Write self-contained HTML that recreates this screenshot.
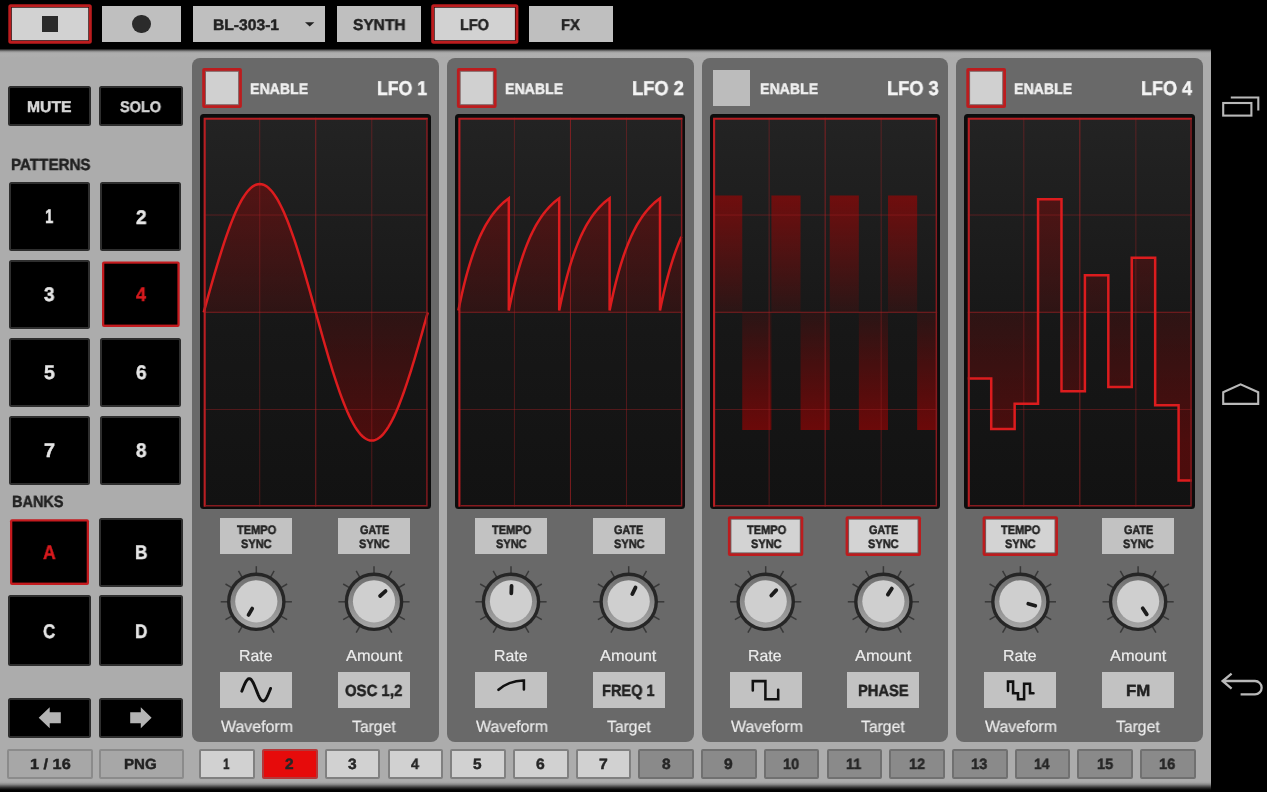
<!DOCTYPE html>
<html lang="en"><head><meta charset="utf-8"><title>LFO</title>
<style>
html,body{margin:0;padding:0;background:#000}
body{width:1267px;height:792px;position:relative;overflow:hidden;font-family:"Liberation Sans",sans-serif}
.a{position:absolute;box-sizing:border-box;display:block}
.t{position:absolute;white-space:nowrap;transform-origin:0 0;display:block;will-change:transform;text-rendering:geometricPrecision}
.bd{-webkit-text-stroke:.45px currentColor}
.rg{-webkit-text-stroke:.18px currentColor}
.topbar{background:#000}
.mainbg{background:#acacac}
.topshadow{background:linear-gradient(#000 0,#000 6%,#3c3c3c 18%,#7c7c7c 29%,#9e9e9e 40%,#adadad 52%,#aeaeae 75%,#acacac 100%)}
.botshadow{background:linear-gradient(#acacac 0,#a4a4a4 14%,#8a8a8a 30%,#5a5a5a 46%,#2a2a2a 62%,#0a0a0a 78%,#000 88%)}
.tb{background:#bfbfbf}
.tbact{background:#000;border:2.3px solid #c4191c;border-radius:2px}
.tbact i{position:absolute;left:1px;top:1px;right:1px;bottom:1px;background:#d2d2d2}
.pad{background:#000;border:2px solid #2e2e2e;border-radius:2.5px}
.padact{background:#000;border:2.4px solid #c41a1e;border-radius:1.5px;box-shadow:0 0 1.5px rgba(220,60,60,.8)}
.sbtn{border:2px solid #8b8b8b;border-radius:2px}
.sbtn.dim{background:#a7a7a7}
.sbtn.lit{background:#d1d1d1;border-color:#808080}
.sbtn.red{background:#e60b0b;border-color:#b3393a}
.sbtn.dim2{background:#8a8a8a;border-color:#707070}
.panel{background:#696969;border-radius:8px}
.chk{background:#bcbcbc}
.chk.on{background:#c4191c;border-radius:2px}
.chk.on i{position:absolute;left:3.4px;top:3.4px;right:3.4px;bottom:3.4px;background:#d0d0d0}
.dframe{background:#0c0c0c;border-radius:3.5px}
.sy{background:#c2c2c2}
.sy.on{background:#696969;border:2.6px solid #c01c1e;border-radius:2px}
.sy.on i{position:absolute;left:.9px;top:.9px;right:.9px;bottom:.9px;background:#d3d3d3}
svg .g{stroke:#a82024;stroke-width:1;opacity:.42}
svg .g.c{opacity:.7}
</style></head>
<body>
<svg width="0" height="0" style="position:absolute"><defs><linearGradient id="dbg" x1="0" y1="0" x2="0" y2="1"><stop offset="0" stop-color="#232323"/><stop offset="0.55" stop-color="#171717"/><stop offset="1" stop-color="#121212"/></linearGradient><linearGradient id="wf" gradientUnits="userSpaceOnUse" x1="0" y1="180" x2="0" y2="445"><stop offset="0" stop-color="#aa0000" stop-opacity=".38"/><stop offset="0.5" stop-color="#aa0000" stop-opacity=".15"/><stop offset="1" stop-color="#aa0000" stop-opacity=".38"/></linearGradient><linearGradient id="wf2" gradientUnits="userSpaceOnUse" x1="0" y1="195" x2="0" y2="430"><stop offset="0" stop-color="#b00000" stop-opacity=".56"/><stop offset="0.5" stop-color="#b00000" stop-opacity=".12"/><stop offset="1" stop-color="#b00000" stop-opacity=".56"/></linearGradient><linearGradient id="ring" x1="0" y1="0" x2="0" y2="1"><stop offset="0" stop-color="#6e6e6e"/><stop offset="1" stop-color="#a6a6a6"/></linearGradient></defs></svg>
<div class="a mainbg" style="left:0px;top:48px;width:1211px;height:744px;"></div>
<div class="a topshadow" style="left:0px;top:48px;width:1211px;height:10px;"></div>
<div class="a botshadow" style="left:0px;top:781px;width:1211px;height:11px;"></div>
<div class="a topbar" style="left:0;top:0;width:1267px;height:48px"></div>
<svg class="a" style="left:7px;top:3px" width="86" height="42" viewBox="7 3 86 42"><rect x="8.3" y="4.2" width="83.5" height="39.5" rx="2.5" fill="#bc1c1e"/><rect x="11.1" y="7" width="77.9" height="33.9" fill="#2a0808"/><rect x="11.8" y="7.7" width="76.5" height="32.5" fill="#d2d2d2"/></svg>
<div class="a" style="left:42px;top:16px;width:16px;height:16px;background:#2b2b2b"></div>
<div class="a tb" style="left:101.8px;top:6px;width:79.5px;height:36px;"></div>
<div class="a" style="left:132.1px;top:14.7px;width:18.6px;height:18.6px;background:#2b2b2b;border-radius:50%"></div>
<div class="a tb" style="left:193.2px;top:6px;width:132.1px;height:36px;"></div>
<span class="t bd" style="left:213.14px;top:18.18px;font-size:15.35px;line-height:15.35px;font-weight:bold;color:#222;transform:scale(1.0193,1.0000)">BL-303-1</span>
<svg class="a" style="left:304px;top:21px" width="12" height="7" viewBox="0 0 12 7"><path d="M1 1.2 H10.4 L5.7 5.6 Z" fill="#222"/></svg>
<div class="a tb" style="left:337.1px;top:6px;width:83.6px;height:36px;"></div>
<span class="t bd" style="left:353.18px;top:17.93px;font-size:15.64px;line-height:15.64px;font-weight:bold;color:#222;transform:scale(0.9912,1.0000)">SYNTH</span>
<svg class="a" style="left:430px;top:3px" width="90" height="42" viewBox="430 3 90 42"><rect x="431.2" y="4.2" width="87.2" height="39.5" rx="2.5" fill="#bc1c1e"/><rect x="434" y="7" width="81.6" height="33.9" fill="#2a0808"/><rect x="434.7" y="7.7" width="80.2" height="32.5" fill="#d2d2d2"/></svg>
<span class="t bd" style="left:459.6px;top:17.93px;font-size:15.64px;line-height:15.64px;font-weight:bold;color:#222;transform:scale(0.9277,1.0000)">LFO</span>
<div class="a tb" style="left:528.5px;top:6px;width:84.1px;height:36px;"></div>
<span class="t bd" style="left:560.58px;top:17.93px;font-size:15.64px;line-height:15.64px;font-weight:bold;color:#222;transform:scale(0.9493,1.0000)">FX</span>
<div class="a pad" style="left:8.2px;top:86px;width:82.8px;height:39.6px;"></div>
<span class="t bd" style="left:27.13px;top:99.76px;font-size:15.49px;line-height:15.49px;font-weight:bold;color:#d6d6d6;transform:scale(1.0141,1.0000)">MUTE</span>
<div class="a pad" style="left:99.2px;top:86px;width:83.4px;height:39.6px;"></div>
<span class="t bd" style="left:120.4px;top:99.76px;font-size:15.49px;line-height:15.49px;font-weight:bold;color:#d6d6d6;transform:scale(0.9381,1.0000)">SOLO</span>
<span class="t bd" style="left:11.15px;top:157.04px;font-size:16.22px;line-height:16.22px;font-weight:bold;color:#222;transform:scale(0.9370,1.0000)">PATTERNS</span>
<div class="a pad" style="left:9px;top:181.8px;width:81px;height:69px;"></div>
<span class="t bd" style="left:45.14px;top:207.79px;font-size:19.71px;line-height:19.71px;font-weight:bold;color:#e6e6e6;transform:scale(0.7582,1.0000)">1</span>
<div class="a pad" style="left:100.2px;top:181.8px;width:81.3px;height:69px;"></div>
<span class="t bd" style="left:135.53px;top:208.79px;font-size:19.71px;line-height:19.71px;font-weight:bold;color:#e6e6e6;transform:scale(0.9639,1.0000)">2</span>
<div class="a pad" style="left:9px;top:259.8px;width:81px;height:69px;"></div>
<span class="t bd" style="left:44.32px;top:285.79px;font-size:19.71px;line-height:19.71px;font-weight:bold;color:#e6e6e6;transform:scale(0.9600,1.0000)">3</span>
<svg class="a" style="left:101px;top:260px" width="80" height="68" viewBox="101 260 80 68"><rect x="102" y="261.4" width="77.7" height="65.5" rx="2" fill="#c41a1e"/><rect x="104.3" y="263.7" width="73.1" height="60.9" fill="#000"/></svg>
<span class="t bd" style="left:135.92px;top:285.79px;font-size:19.71px;line-height:19.71px;font-weight:bold;color:#d81a1e;transform:scale(0.9221,1.0000)">4</span>
<div class="a pad" style="left:9px;top:337.8px;width:81px;height:69px;"></div>
<span class="t bd" style="left:44.27px;top:363.79px;font-size:19.71px;line-height:19.71px;font-weight:bold;color:#e6e6e6;transform:scale(0.9848,1.0000)">5</span>
<div class="a pad" style="left:100.2px;top:337.8px;width:81.3px;height:69px;"></div>
<span class="t bd" style="left:135.53px;top:363.79px;font-size:19.71px;line-height:19.71px;font-weight:bold;color:#e6e6e6;transform:scale(0.9651,1.0000)">6</span>
<div class="a pad" style="left:9px;top:415.8px;width:81px;height:69px;"></div>
<span class="t bd" style="left:43.96px;top:441.79px;font-size:19.71px;line-height:19.71px;font-weight:bold;color:#e6e6e6;transform:scale(1.0058,1.0000)">7</span>
<div class="a pad" style="left:100.2px;top:415.8px;width:81.3px;height:69px;"></div>
<span class="t bd" style="left:135.63px;top:441.79px;font-size:19.71px;line-height:19.71px;font-weight:bold;color:#e6e6e6;transform:scale(0.9594,1.0000)">8</span>
<span class="t bd" style="left:11.79px;top:494.44px;font-size:16.22px;line-height:16.22px;font-weight:bold;color:#222;transform:scale(0.8945,1.0000)">BANKS</span>
<svg class="a" style="left:9px;top:518px" width="81" height="68" viewBox="9 518 81 68"><rect x="10" y="519.2" width="79" height="65.7" rx="2" fill="#c41a1e"/><rect x="12.3" y="521.5" width="74.4" height="61.1" fill="#000"/></svg>
<span class="t bd" style="left:43.34px;top:543.69px;font-size:19.71px;line-height:19.71px;font-weight:bold;color:#d81a1e;transform:scale(0.8959,1.0000)">A</span>
<div class="a pad" style="left:99.2px;top:517.6px;width:83.5px;height:69.2px;"></div>
<span class="t bd" style="left:134.61px;top:543.69px;font-size:19.71px;line-height:19.71px;font-weight:bold;color:#e6e6e6;transform:scale(0.8722,1.0000)">B</span>
<div class="a pad" style="left:8.2px;top:595.3px;width:82.6px;height:70.4px;"></div>
<span class="t bd" style="left:43.45px;top:622.99px;font-size:19.71px;line-height:19.71px;font-weight:bold;color:#e6e6e6;transform:scale(0.8630,1.0000)">C</span>
<div class="a pad" style="left:99.2px;top:595.3px;width:83.5px;height:70.4px;"></div>
<span class="t bd" style="left:134.77px;top:622.99px;font-size:19.71px;line-height:19.71px;font-weight:bold;color:#e6e6e6;transform:scale(0.8695,1.0000)">D</span>
<div class="a pad" style="left:8.2px;top:698px;width:82.6px;height:39.5px;"></div>
<div class="a pad" style="left:99.1px;top:698px;width:83.7px;height:39.5px;"></div>
<svg class="a" style="left:38px;top:706px" width="24" height="24" viewBox="38 706 24 24"><path d="M38.7 717.7 L49.7 707.3 V712.2 H60.8 V723.2 H49.7 V728.3 Z" fill="#b4b4b4"/></svg>
<svg class="a" style="left:129px;top:706px" width="24" height="24" viewBox="129 706 24 24"><path d="M151.6 717.7 L140.8 707.3 V712.2 H130.2 V723.2 H140.8 V728.3 Z" fill="#b4b4b4"/></svg>
<div class="a sbtn dim" style="left:7.4px;top:749px;width:85.3px;height:30px;"></div>
<span class="t bd" style="left:29.91px;top:758.4px;font-size:14.62px;line-height:14.62px;font-weight:bold;color:#222;transform:scale(1.1132,1.0000)">1 / 16</span>
<div class="a sbtn dim" style="left:99.1px;top:749px;width:85.3px;height:30px;"></div>
<span class="t bd" style="left:124.37px;top:758.4px;font-size:14.62px;line-height:14.62px;font-weight:bold;color:#222;transform:scale(1.0322,1.0000)">PNG</span>
<div class="a sbtn lit" style="left:199.4px;top:749px;width:55.6px;height:30px;"></div>
<span class="t bd" style="left:223.35px;top:758.45px;font-size:14.91px;line-height:14.91px;font-weight:bold;color:#262626;transform:scale(0.7920,1.0000)">1</span>
<div class="a sbtn red" style="left:262.12px;top:749px;width:55.6px;height:30px;"></div>
<span class="t bd" style="left:285.23px;top:758.45px;font-size:14.91px;line-height:14.91px;font-weight:bold;color:#262626;transform:scale(1.0361,1.0000)">2</span>
<div class="a sbtn lit" style="left:324.84px;top:749px;width:55.6px;height:30px;"></div>
<span class="t bd" style="left:348.11px;top:758.45px;font-size:14.91px;line-height:14.91px;font-weight:bold;color:#262626;transform:scale(1.0414,1.0000)">3</span>
<div class="a sbtn lit" style="left:387.56px;top:749px;width:55.6px;height:30px;"></div>
<span class="t bd" style="left:410.99px;top:758.45px;font-size:14.91px;line-height:14.91px;font-weight:bold;color:#262626;transform:scale(0.9564,1.0000)">4</span>
<div class="a sbtn lit" style="left:450.28px;top:749px;width:55.6px;height:30px;"></div>
<span class="t bd" style="left:473.47px;top:758.45px;font-size:14.91px;line-height:14.91px;font-weight:bold;color:#262626;transform:scale(1.0314,1.0000)">5</span>
<div class="a sbtn lit" style="left:513px;top:749px;width:55.6px;height:30px;"></div>
<span class="t bd" style="left:536.11px;top:758.45px;font-size:14.91px;line-height:14.91px;font-weight:bold;color:#262626;transform:scale(1.0517,1.0000)">6</span>
<div class="a sbtn lit" style="left:575.72px;top:749px;width:55.6px;height:30px;"></div>
<span class="t bd" style="left:598.67px;top:758.45px;font-size:14.91px;line-height:14.91px;font-weight:bold;color:#262626;transform:scale(1.0549,1.0000)">7</span>
<div class="a sbtn dim2" style="left:638.44px;top:749px;width:55.6px;height:30px;"></div>
<span class="t bd" style="left:661.63px;top:758.45px;font-size:14.91px;line-height:14.91px;font-weight:bold;color:#262626;transform:scale(1.0414,1.0000)">8</span>
<div class="a sbtn dim2" style="left:701.16px;top:749px;width:55.6px;height:30px;"></div>
<span class="t bd" style="left:724.27px;top:758.45px;font-size:14.91px;line-height:14.91px;font-weight:bold;color:#262626;transform:scale(1.0506,1.0000)">9</span>
<div class="a sbtn dim2" style="left:763.88px;top:749px;width:55.6px;height:30px;"></div>
<span class="t bd" style="left:782.98px;top:758.45px;font-size:14.91px;line-height:14.91px;font-weight:bold;color:#262626;transform:scale(0.9782,1.0000)">10</span>
<div class="a sbtn dim2" style="left:826.6px;top:749px;width:55.6px;height:30px;"></div>
<span class="t bd" style="left:846.21px;top:758.45px;font-size:14.91px;line-height:14.91px;font-weight:bold;color:#262626;transform:scale(0.9666,1.0000)">11</span>
<div class="a sbtn dim2" style="left:889.32px;top:749px;width:55.6px;height:30px;"></div>
<span class="t bd" style="left:908.95px;top:758.45px;font-size:14.91px;line-height:14.91px;font-weight:bold;color:#262626;transform:scale(0.9750,1.0000)">12</span>
<div class="a sbtn dim2" style="left:952.04px;top:749px;width:55.6px;height:30px;"></div>
<span class="t bd" style="left:971.13px;top:758.45px;font-size:14.91px;line-height:14.91px;font-weight:bold;color:#262626;transform:scale(0.9865,1.0000)">13</span>
<div class="a sbtn dim2" style="left:1014.76px;top:749px;width:55.6px;height:30px;"></div>
<span class="t bd" style="left:1033.89px;top:758.45px;font-size:14.91px;line-height:14.91px;font-weight:bold;color:#262626;transform:scale(0.9350,1.0000)">14</span>
<div class="a sbtn dim2" style="left:1077.48px;top:749px;width:55.6px;height:30px;"></div>
<span class="t bd" style="left:1096.58px;top:758.45px;font-size:14.91px;line-height:14.91px;font-weight:bold;color:#262626;transform:scale(0.9799,1.0000)">15</span>
<div class="a sbtn dim2" style="left:1140.2px;top:749px;width:55.6px;height:30px;"></div>
<span class="t bd" style="left:1159.29px;top:758.45px;font-size:14.91px;line-height:14.91px;font-weight:bold;color:#262626;transform:scale(0.9852,1.0000)">16</span>
<div class="a panel" style="left:192.2px;top:58.3px;width:246.7px;height:683.7px;"></div>
<svg class="a" style="left:201px;top:67px" width="42" height="42" viewBox="201 67 42 42"><rect x="202.2" y="68" width="39.7" height="40" rx="2" fill="#bc1c1e"/><rect x="205" y="70.8" width="34.1" height="34.4" fill="#806060"/><rect x="206" y="71.8" width="32.1" height="32.4" fill="#d0d0d0"/></svg>
<span class="t bd" style="left:250.12px;top:82.2px;font-size:15.2px;line-height:15.2px;font-weight:bold;color:#efefef;transform:scale(0.9320,1.0000)">ENABLE</span>
<span class="t bd" style="left:377.18px;top:79.42px;font-size:20.15px;line-height:20.15px;font-weight:bold;color:#f4f4f4;transform:scale(0.8793,1.0000)">LFO 1</span>
<div class="a dframe" style="left:200.1px;top:114.2px;width:230.5px;height:394.6px;"></div>
<svg class="a" style="left:202px;top:116px" width="227" height="392" viewBox="202 116 227 392"><rect x="203.7" y="117.8" width="224.1" height="388.9" fill="url(#dbg)"/><path d="M203.7 312.3 L203.7 312.3 L205.57 305.59 L207.44 298.89 L209.3 292.23 L211.17 285.62 L213.04 279.09 L214.91 272.65 L216.77 266.32 L218.64 260.12 L220.51 254.05 L222.38 248.15 L224.24 242.42 L226.11 236.89 L227.98 231.56 L229.84 226.45 L231.71 221.58 L233.58 216.95 L235.45 212.59 L237.31 208.5 L239.18 204.7 L241.05 201.19 L242.92 197.98 L244.78 195.09 L246.65 192.52 L248.52 190.28 L250.39 188.37 L252.25 186.8 L254.12 185.58 L255.99 184.7 L257.86 184.18 L259.72 184 L261.59 184.18 L263.46 184.7 L265.33 185.58 L267.19 186.8 L269.06 188.37 L270.93 190.28 L272.8 192.52 L274.66 195.09 L276.53 197.98 L278.4 201.19 L280.27 204.7 L282.13 208.5 L284 212.59 L285.87 216.95 L287.74 221.58 L289.61 226.45 L291.47 231.56 L293.34 236.89 L295.21 242.42 L297.07 248.15 L298.94 254.05 L300.81 260.12 L302.68 266.32 L304.54 272.65 L306.41 279.09 L308.28 285.62 L310.15 292.23 L312.01 298.89 L313.88 305.59 L315.75 312.3 L317.62 319.01 L319.49 325.71 L321.35 332.37 L323.22 338.98 L325.09 345.51 L326.95 351.95 L328.82 358.28 L330.69 364.48 L332.56 370.55 L334.42 376.45 L336.29 382.18 L338.16 387.71 L340.03 393.04 L341.89 398.15 L343.76 403.02 L345.63 407.65 L347.5 412.01 L349.37 416.1 L351.23 419.9 L353.1 423.41 L354.97 426.62 L356.83 429.51 L358.7 432.08 L360.57 434.32 L362.44 436.23 L364.3 437.8 L366.17 439.02 L368.04 439.9 L369.91 440.42 L371.77 440.6 L373.64 440.42 L375.51 439.9 L377.38 439.02 L379.25 437.8 L381.11 436.23 L382.98 434.32 L384.85 432.08 L386.71 429.51 L388.58 426.62 L390.45 423.41 L392.32 419.9 L394.18 416.1 L396.05 412.01 L397.92 407.65 L399.79 403.02 L401.65 398.15 L403.52 393.04 L405.39 387.71 L407.26 382.18 L409.12 376.45 L410.99 370.55 L412.86 364.48 L414.73 358.28 L416.59 351.95 L418.46 345.51 L420.33 338.98 L422.2 332.37 L424.06 325.71 L425.93 319.01 L427.8 312.3 L427.8 312.3 Z" fill="url(#wf)"/><line x1="259.72" y1="117.8" x2="259.72" y2="506.7" class="g"/><line x1="203.7" y1="215.02" x2="427.8" y2="215.02" class="g"/><line x1="315.75" y1="117.8" x2="315.75" y2="506.7" class="g c"/><line x1="203.7" y1="312.25" x2="427.8" y2="312.25" class="g c"/><line x1="371.77" y1="117.8" x2="371.77" y2="506.7" class="g"/><line x1="203.7" y1="409.47" x2="427.8" y2="409.47" class="g"/><path d="M203.7 312.3 L205.57 305.59 L207.44 298.89 L209.3 292.23 L211.17 285.62 L213.04 279.09 L214.91 272.65 L216.77 266.32 L218.64 260.12 L220.51 254.05 L222.38 248.15 L224.24 242.42 L226.11 236.89 L227.98 231.56 L229.84 226.45 L231.71 221.58 L233.58 216.95 L235.45 212.59 L237.31 208.5 L239.18 204.7 L241.05 201.19 L242.92 197.98 L244.78 195.09 L246.65 192.52 L248.52 190.28 L250.39 188.37 L252.25 186.8 L254.12 185.58 L255.99 184.7 L257.86 184.18 L259.72 184 L261.59 184.18 L263.46 184.7 L265.33 185.58 L267.19 186.8 L269.06 188.37 L270.93 190.28 L272.8 192.52 L274.66 195.09 L276.53 197.98 L278.4 201.19 L280.27 204.7 L282.13 208.5 L284 212.59 L285.87 216.95 L287.74 221.58 L289.61 226.45 L291.47 231.56 L293.34 236.89 L295.21 242.42 L297.07 248.15 L298.94 254.05 L300.81 260.12 L302.68 266.32 L304.54 272.65 L306.41 279.09 L308.28 285.62 L310.15 292.23 L312.01 298.89 L313.88 305.59 L315.75 312.3 L317.62 319.01 L319.49 325.71 L321.35 332.37 L323.22 338.98 L325.09 345.51 L326.95 351.95 L328.82 358.28 L330.69 364.48 L332.56 370.55 L334.42 376.45 L336.29 382.18 L338.16 387.71 L340.03 393.04 L341.89 398.15 L343.76 403.02 L345.63 407.65 L347.5 412.01 L349.37 416.1 L351.23 419.9 L353.1 423.41 L354.97 426.62 L356.83 429.51 L358.7 432.08 L360.57 434.32 L362.44 436.23 L364.3 437.8 L366.17 439.02 L368.04 439.9 L369.91 440.42 L371.77 440.6 L373.64 440.42 L375.51 439.9 L377.38 439.02 L379.25 437.8 L381.11 436.23 L382.98 434.32 L384.85 432.08 L386.71 429.51 L388.58 426.62 L390.45 423.41 L392.32 419.9 L394.18 416.1 L396.05 412.01 L397.92 407.65 L399.79 403.02 L401.65 398.15 L403.52 393.04 L405.39 387.71 L407.26 382.18 L409.12 376.45 L410.99 370.55 L412.86 364.48 L414.73 358.28 L416.59 351.95 L418.46 345.51 L420.33 338.98 L422.2 332.37 L424.06 325.71 L425.93 319.01 L427.8 312.3" fill="none" stroke="#dc1c1e" stroke-width="2.5" stroke-linejoin="miter"/><path d="M204.7 506.7 V118.8 H427.8" fill="none" stroke="#b81e22" stroke-width="2.1"/><path d="M205.7 505.8 H426.9 V119.8" fill="none" stroke="#861a1e" stroke-width="1.4"/></svg>
<div class="a sy" style="left:220.2px;top:518px;width:72px;height:36.3px;"></div>
<span class="t bd" style="left:237.17px;top:524.46px;font-size:12.3px;line-height:12.3px;font-weight:bold;color:#222;transform:scale(0.8963,1.0000)">TEMPO</span>
<span class="t bd" style="left:240.86px;top:537.56px;font-size:12.3px;line-height:12.3px;font-weight:bold;color:#222;transform:scale(0.8943,1.0000)">SYNC</span>
<div class="a sy" style="left:337.9px;top:518px;width:72px;height:36.3px;"></div>
<span class="t bd" style="left:359.65px;top:524.46px;font-size:12.3px;line-height:12.3px;font-weight:bold;color:#222;transform:scale(0.8810,1.0000)">GATE</span>
<span class="t bd" style="left:359.2px;top:537.56px;font-size:12.3px;line-height:12.3px;font-weight:bold;color:#222;transform:scale(0.8943,1.0000)">SYNC</span>
<svg class="a" style="left:192px;top:560px" width="248" height="84" viewBox="192 560 248 84"><g transform="translate(256.3 601.8)"><line x1="-14" y1="24.25" x2="-17.8" y2="30.83" stroke="#383838" stroke-width="1.5"/><line x1="-24.25" y1="14" x2="-30.83" y2="17.8" stroke="#383838" stroke-width="1.5"/><line x1="-28" y1="0" x2="-35.6" y2="0" stroke="#383838" stroke-width="1.5"/><line x1="-24.25" y1="-14" x2="-30.83" y2="-17.8" stroke="#383838" stroke-width="1.5"/><line x1="-14" y1="-24.25" x2="-17.8" y2="-30.83" stroke="#383838" stroke-width="1.5"/><line x1="0" y1="-28" x2="0" y2="-35.6" stroke="#383838" stroke-width="1.5"/><line x1="14" y1="-24.25" x2="17.8" y2="-30.83" stroke="#383838" stroke-width="1.5"/><line x1="24.25" y1="-14" x2="30.83" y2="-17.8" stroke="#383838" stroke-width="1.5"/><line x1="28" y1="0" x2="35.6" y2="0" stroke="#383838" stroke-width="1.5"/><line x1="24.25" y1="14" x2="30.83" y2="17.8" stroke="#383838" stroke-width="1.5"/><line x1="14" y1="24.25" x2="17.8" y2="30.83" stroke="#383838" stroke-width="1.5"/><circle r="29.3" fill="#262626"/><circle r="25.9" fill="url(#ring)"/><circle cy="-0.5" r="21.1" fill="#cfcfcf"/><line x1="-4.1" y1="6.8" x2="-7.75" y2="13.12" stroke="#1c1c1c" stroke-width="3.8" stroke-linecap="round"/></g><g transform="translate(374 601.8)"><line x1="-14" y1="24.25" x2="-17.8" y2="30.83" stroke="#383838" stroke-width="1.5"/><line x1="-24.25" y1="14" x2="-30.83" y2="17.8" stroke="#383838" stroke-width="1.5"/><line x1="-28" y1="0" x2="-35.6" y2="0" stroke="#383838" stroke-width="1.5"/><line x1="-24.25" y1="-14" x2="-30.83" y2="-17.8" stroke="#383838" stroke-width="1.5"/><line x1="-14" y1="-24.25" x2="-17.8" y2="-30.83" stroke="#383838" stroke-width="1.5"/><line x1="0" y1="-28" x2="0" y2="-35.6" stroke="#383838" stroke-width="1.5"/><line x1="14" y1="-24.25" x2="17.8" y2="-30.83" stroke="#383838" stroke-width="1.5"/><line x1="24.25" y1="-14" x2="30.83" y2="-17.8" stroke="#383838" stroke-width="1.5"/><line x1="28" y1="0" x2="35.6" y2="0" stroke="#383838" stroke-width="1.5"/><line x1="24.25" y1="14" x2="30.83" y2="17.8" stroke="#383838" stroke-width="1.5"/><line x1="14" y1="24.25" x2="17.8" y2="30.83" stroke="#383838" stroke-width="1.5"/><circle r="29.3" fill="#262626"/><circle r="25.9" fill="url(#ring)"/><circle cy="-0.5" r="21.1" fill="#cfcfcf"/><line x1="6.09" y1="-5.79" x2="11.52" y2="-10.67" stroke="#1c1c1c" stroke-width="3.8" stroke-linecap="round"/></g></svg>
<span class="t rg" style="left:239.03px;top:648.58px;font-size:15.84px;line-height:15.84px;font-weight:normal;color:#ececec;transform:scale(0.9989,1.0000)">Rate</span>
<span class="t rg" style="left:345.72px;top:648.58px;font-size:15.84px;line-height:15.84px;font-weight:normal;color:#ececec;transform:scale(1.0327,1.0000)">Amount</span>
<div class="a sy" style="left:220.2px;top:672px;width:72px;height:36px;"></div>
<div class="a sy" style="left:337.9px;top:672px;width:72px;height:36px;"></div>
<span class="t bd" style="left:345.24px;top:683.34px;font-size:16.22px;line-height:16.22px;font-weight:bold;color:#222;transform:scale(0.9214,1.0000)">OSC 1,2</span>
<span class="t rg" style="left:221.32px;top:718.61px;font-size:16.28px;line-height:16.28px;font-weight:normal;color:#ececec;transform:scale(0.9784,1.0000)">Waveform</span>
<span class="t rg" style="left:351.99px;top:718.61px;font-size:16.28px;line-height:16.28px;font-weight:normal;color:#ececec;transform:scale(0.9650,1.0000)">Target</span>
<svg class="a" style="left:220px;top:672px" width="74" height="36" viewBox="-36.2 -17.8 74 36"><path d="M-14.4 1.4 L-13.68 -0.42 L-12.96 -2.24 L-12.24 -3.99 L-11.52 -5.64 L-10.8 -7.14 L-10.08 -8.45 L-9.36 -9.53 L-8.64 -10.36 L-7.92 -10.91 L-7.2 -11.18 L-6.48 -11.14 L-5.76 -10.81 L-5.04 -10.19 L-4.32 -9.3 L-3.6 -8.16 L-2.88 -6.81 L-2.16 -5.27 L-1.44 -3.59 L-0.72 -1.82 L0 0 L0.72 1.82 L1.44 3.59 L2.16 5.27 L2.88 6.81 L3.6 8.16 L4.32 9.3 L5.04 10.19 L5.76 10.81 L6.48 11.14 L7.2 11.18 L7.92 10.91 L8.64 10.36 L9.36 9.53 L10.08 8.45 L10.8 7.14 L11.52 5.64 L12.24 3.99 L12.96 2.24 L13.68 0.42 L14.4 -1.4" fill="none" stroke="#111" stroke-width="2.9" stroke-linecap="round" stroke-linejoin="miter"/></svg>
<div class="a panel" style="left:446.9px;top:58.3px;width:246.7px;height:683.7px;"></div>
<svg class="a" style="left:455px;top:67px" width="43" height="42" viewBox="455 67 43 42"><rect x="456.9" y="68" width="39.7" height="40" rx="2" fill="#bc1c1e"/><rect x="459.7" y="70.8" width="34.1" height="34.4" fill="#806060"/><rect x="460.7" y="71.8" width="32.1" height="32.4" fill="#d0d0d0"/></svg>
<span class="t bd" style="left:504.82px;top:82.2px;font-size:15.2px;line-height:15.2px;font-weight:bold;color:#efefef;transform:scale(0.9320,1.0000)">ENABLE</span>
<span class="t bd" style="left:631.85px;top:79.42px;font-size:20.15px;line-height:20.15px;font-weight:bold;color:#f4f4f4;transform:scale(0.9095,1.0000)">LFO 2</span>
<div class="a dframe" style="left:454.8px;top:114.2px;width:230.5px;height:394.6px;"></div>
<svg class="a" style="left:457px;top:116px" width="227" height="392" viewBox="457 116 227 392"><rect x="458.4" y="117.8" width="224.1" height="388.9" fill="url(#dbg)"/><path d="M458.4 312.3 L458.4 310.6 L459.66 304.37 L460.92 298.44 L462.18 292.79 L463.44 287.4 L464.7 282.28 L465.96 277.4 L467.22 272.75 L468.48 268.32 L469.74 264.1 L471 260.08 L472.26 256.26 L473.52 252.61 L474.78 249.14 L476.04 245.84 L477.3 242.69 L478.56 239.69 L479.82 236.83 L481.08 234.11 L482.34 231.52 L483.6 229.06 L484.86 226.71 L486.12 224.47 L487.38 222.34 L488.64 220.31 L489.9 218.37 L491.16 216.53 L492.42 214.78 L493.68 213.11 L494.94 211.52 L496.2 210 L497.46 208.56 L498.72 207.19 L499.98 205.88 L501.24 204.63 L502.5 203.44 L503.76 202.31 L505.02 201.23 L506.28 200.21 L507.54 199.23 L508.8 198.3 L508.8 310.6 L510.06 304.37 L511.32 298.44 L512.58 292.79 L513.84 287.4 L515.1 282.28 L516.36 277.4 L517.62 272.75 L518.88 268.32 L520.14 264.1 L521.4 260.08 L522.66 256.26 L523.92 252.61 L525.18 249.14 L526.44 245.84 L527.7 242.69 L528.96 239.69 L530.22 236.83 L531.48 234.11 L532.74 231.52 L534 229.06 L535.26 226.71 L536.52 224.47 L537.78 222.34 L539.04 220.31 L540.3 218.37 L541.56 216.53 L542.82 214.78 L544.08 213.11 L545.34 211.52 L546.6 210 L547.86 208.56 L549.12 207.19 L550.38 205.88 L551.64 204.63 L552.9 203.44 L554.16 202.31 L555.42 201.23 L556.68 200.21 L557.94 199.23 L559.2 198.3 L559.2 310.6 L560.46 304.37 L561.72 298.44 L562.98 292.79 L564.24 287.4 L565.5 282.28 L566.76 277.4 L568.02 272.75 L569.28 268.32 L570.54 264.1 L571.8 260.08 L573.06 256.26 L574.32 252.61 L575.58 249.14 L576.84 245.84 L578.1 242.69 L579.36 239.69 L580.62 236.83 L581.88 234.11 L583.14 231.52 L584.4 229.06 L585.66 226.71 L586.92 224.47 L588.18 222.34 L589.44 220.31 L590.7 218.37 L591.96 216.53 L593.22 214.78 L594.48 213.11 L595.74 211.52 L597 210 L598.26 208.56 L599.52 207.19 L600.78 205.88 L602.04 204.63 L603.3 203.44 L604.56 202.31 L605.82 201.23 L607.08 200.21 L608.34 199.23 L609.6 198.3 L609.6 310.6 L610.86 304.37 L612.12 298.44 L613.38 292.79 L614.64 287.4 L615.9 282.28 L617.16 277.4 L618.42 272.75 L619.68 268.32 L620.94 264.1 L622.2 260.08 L623.46 256.26 L624.72 252.61 L625.98 249.14 L627.24 245.84 L628.5 242.69 L629.76 239.69 L631.02 236.83 L632.28 234.11 L633.54 231.52 L634.8 229.06 L636.06 226.71 L637.32 224.47 L638.58 222.34 L639.84 220.31 L641.1 218.37 L642.36 216.53 L643.62 214.78 L644.88 213.11 L646.14 211.52 L647.4 210 L648.66 208.56 L649.92 207.19 L651.18 205.88 L652.44 204.63 L653.7 203.44 L654.96 202.31 L656.22 201.23 L657.48 200.21 L658.74 199.23 L660 198.3 L660 310.6 L661.26 304.37 L662.52 298.44 L663.78 292.79 L665.04 287.4 L666.3 282.28 L667.56 277.4 L668.82 272.75 L670.08 268.32 L671.34 264.1 L672.6 260.08 L673.86 256.26 L675.12 252.61 L676.38 249.14 L677.64 245.84 L678.9 242.69 L680.16 239.69 L681.42 236.83 L681.42 312.3 Z" fill="url(#wf)"/><line x1="514.42" y1="117.8" x2="514.42" y2="506.7" class="g"/><line x1="458.4" y1="215.02" x2="682.5" y2="215.02" class="g"/><line x1="570.45" y1="117.8" x2="570.45" y2="506.7" class="g c"/><line x1="458.4" y1="312.25" x2="682.5" y2="312.25" class="g c"/><line x1="626.47" y1="117.8" x2="626.47" y2="506.7" class="g"/><line x1="458.4" y1="409.47" x2="682.5" y2="409.47" class="g"/><path d="M458.4 310.6 L459.66 304.37 L460.92 298.44 L462.18 292.79 L463.44 287.4 L464.7 282.28 L465.96 277.4 L467.22 272.75 L468.48 268.32 L469.74 264.1 L471 260.08 L472.26 256.26 L473.52 252.61 L474.78 249.14 L476.04 245.84 L477.3 242.69 L478.56 239.69 L479.82 236.83 L481.08 234.11 L482.34 231.52 L483.6 229.06 L484.86 226.71 L486.12 224.47 L487.38 222.34 L488.64 220.31 L489.9 218.37 L491.16 216.53 L492.42 214.78 L493.68 213.11 L494.94 211.52 L496.2 210 L497.46 208.56 L498.72 207.19 L499.98 205.88 L501.24 204.63 L502.5 203.44 L503.76 202.31 L505.02 201.23 L506.28 200.21 L507.54 199.23 L508.8 198.3 L508.8 310.6 L510.06 304.37 L511.32 298.44 L512.58 292.79 L513.84 287.4 L515.1 282.28 L516.36 277.4 L517.62 272.75 L518.88 268.32 L520.14 264.1 L521.4 260.08 L522.66 256.26 L523.92 252.61 L525.18 249.14 L526.44 245.84 L527.7 242.69 L528.96 239.69 L530.22 236.83 L531.48 234.11 L532.74 231.52 L534 229.06 L535.26 226.71 L536.52 224.47 L537.78 222.34 L539.04 220.31 L540.3 218.37 L541.56 216.53 L542.82 214.78 L544.08 213.11 L545.34 211.52 L546.6 210 L547.86 208.56 L549.12 207.19 L550.38 205.88 L551.64 204.63 L552.9 203.44 L554.16 202.31 L555.42 201.23 L556.68 200.21 L557.94 199.23 L559.2 198.3 L559.2 310.6 L560.46 304.37 L561.72 298.44 L562.98 292.79 L564.24 287.4 L565.5 282.28 L566.76 277.4 L568.02 272.75 L569.28 268.32 L570.54 264.1 L571.8 260.08 L573.06 256.26 L574.32 252.61 L575.58 249.14 L576.84 245.84 L578.1 242.69 L579.36 239.69 L580.62 236.83 L581.88 234.11 L583.14 231.52 L584.4 229.06 L585.66 226.71 L586.92 224.47 L588.18 222.34 L589.44 220.31 L590.7 218.37 L591.96 216.53 L593.22 214.78 L594.48 213.11 L595.74 211.52 L597 210 L598.26 208.56 L599.52 207.19 L600.78 205.88 L602.04 204.63 L603.3 203.44 L604.56 202.31 L605.82 201.23 L607.08 200.21 L608.34 199.23 L609.6 198.3 L609.6 310.6 L610.86 304.37 L612.12 298.44 L613.38 292.79 L614.64 287.4 L615.9 282.28 L617.16 277.4 L618.42 272.75 L619.68 268.32 L620.94 264.1 L622.2 260.08 L623.46 256.26 L624.72 252.61 L625.98 249.14 L627.24 245.84 L628.5 242.69 L629.76 239.69 L631.02 236.83 L632.28 234.11 L633.54 231.52 L634.8 229.06 L636.06 226.71 L637.32 224.47 L638.58 222.34 L639.84 220.31 L641.1 218.37 L642.36 216.53 L643.62 214.78 L644.88 213.11 L646.14 211.52 L647.4 210 L648.66 208.56 L649.92 207.19 L651.18 205.88 L652.44 204.63 L653.7 203.44 L654.96 202.31 L656.22 201.23 L657.48 200.21 L658.74 199.23 L660 198.3 L660 310.6 L661.26 304.37 L662.52 298.44 L663.78 292.79 L665.04 287.4 L666.3 282.28 L667.56 277.4 L668.82 272.75 L670.08 268.32 L671.34 264.1 L672.6 260.08 L673.86 256.26 L675.12 252.61 L676.38 249.14 L677.64 245.84 L678.9 242.69 L680.16 239.69 L681.42 236.83" fill="none" stroke="#dc1c1e" stroke-width="2.5" stroke-linejoin="miter"/><path d="M459.4 506.7 V118.8 H682.5" fill="none" stroke="#b81e22" stroke-width="2.1"/><path d="M460.4 505.8 H681.6 V119.8" fill="none" stroke="#861a1e" stroke-width="1.4"/></svg>
<div class="a sy" style="left:474.9px;top:518px;width:72px;height:36.3px;"></div>
<span class="t bd" style="left:491.87px;top:524.46px;font-size:12.3px;line-height:12.3px;font-weight:bold;color:#222;transform:scale(0.8963,1.0000)">TEMPO</span>
<span class="t bd" style="left:496.2px;top:537.56px;font-size:12.3px;line-height:12.3px;font-weight:bold;color:#222;transform:scale(0.8943,1.0000)">SYNC</span>
<div class="a sy" style="left:592.6px;top:518px;width:72px;height:36.3px;"></div>
<span class="t bd" style="left:614.35px;top:524.46px;font-size:12.3px;line-height:12.3px;font-weight:bold;color:#222;transform:scale(0.8810,1.0000)">GATE</span>
<span class="t bd" style="left:613.9px;top:537.56px;font-size:12.3px;line-height:12.3px;font-weight:bold;color:#222;transform:scale(0.8943,1.0000)">SYNC</span>
<svg class="a" style="left:446px;top:560px" width="248" height="84" viewBox="446 560 248 84"><g transform="translate(511 601.8)"><line x1="-14" y1="24.25" x2="-17.8" y2="30.83" stroke="#383838" stroke-width="1.5"/><line x1="-24.25" y1="14" x2="-30.83" y2="17.8" stroke="#383838" stroke-width="1.5"/><line x1="-28" y1="0" x2="-35.6" y2="0" stroke="#383838" stroke-width="1.5"/><line x1="-24.25" y1="-14" x2="-30.83" y2="-17.8" stroke="#383838" stroke-width="1.5"/><line x1="-14" y1="-24.25" x2="-17.8" y2="-30.83" stroke="#383838" stroke-width="1.5"/><line x1="0" y1="-28" x2="0" y2="-35.6" stroke="#383838" stroke-width="1.5"/><line x1="14" y1="-24.25" x2="17.8" y2="-30.83" stroke="#383838" stroke-width="1.5"/><line x1="24.25" y1="-14" x2="30.83" y2="-17.8" stroke="#383838" stroke-width="1.5"/><line x1="28" y1="0" x2="35.6" y2="0" stroke="#383838" stroke-width="1.5"/><line x1="24.25" y1="14" x2="30.83" y2="17.8" stroke="#383838" stroke-width="1.5"/><line x1="14" y1="24.25" x2="17.8" y2="30.83" stroke="#383838" stroke-width="1.5"/><circle r="29.3" fill="#262626"/><circle r="25.9" fill="url(#ring)"/><circle cy="-0.5" r="21.1" fill="#cfcfcf"/><line x1="0.29" y1="-8.5" x2="0.54" y2="-15.79" stroke="#1c1c1c" stroke-width="3.8" stroke-linecap="round"/></g><g transform="translate(628.7 601.8)"><line x1="-14" y1="24.25" x2="-17.8" y2="30.83" stroke="#383838" stroke-width="1.5"/><line x1="-24.25" y1="14" x2="-30.83" y2="17.8" stroke="#383838" stroke-width="1.5"/><line x1="-28" y1="0" x2="-35.6" y2="0" stroke="#383838" stroke-width="1.5"/><line x1="-24.25" y1="-14" x2="-30.83" y2="-17.8" stroke="#383838" stroke-width="1.5"/><line x1="-14" y1="-24.25" x2="-17.8" y2="-30.83" stroke="#383838" stroke-width="1.5"/><line x1="0" y1="-28" x2="0" y2="-35.6" stroke="#383838" stroke-width="1.5"/><line x1="14" y1="-24.25" x2="17.8" y2="-30.83" stroke="#383838" stroke-width="1.5"/><line x1="24.25" y1="-14" x2="30.83" y2="-17.8" stroke="#383838" stroke-width="1.5"/><line x1="28" y1="0" x2="35.6" y2="0" stroke="#383838" stroke-width="1.5"/><line x1="24.25" y1="14" x2="30.83" y2="17.8" stroke="#383838" stroke-width="1.5"/><line x1="14" y1="24.25" x2="17.8" y2="30.83" stroke="#383838" stroke-width="1.5"/><circle r="29.3" fill="#262626"/><circle r="25.9" fill="url(#ring)"/><circle cy="-0.5" r="21.1" fill="#cfcfcf"/><line x1="3.59" y1="-7.67" x2="6.79" y2="-14.23" stroke="#1c1c1c" stroke-width="3.8" stroke-linecap="round"/></g></svg>
<span class="t rg" style="left:493.73px;top:648.58px;font-size:15.84px;line-height:15.84px;font-weight:normal;color:#ececec;transform:scale(0.9989,1.0000)">Rate</span>
<span class="t rg" style="left:600.42px;top:648.58px;font-size:15.84px;line-height:15.84px;font-weight:normal;color:#ececec;transform:scale(1.0327,1.0000)">Amount</span>
<div class="a sy" style="left:474.9px;top:672px;width:72px;height:36px;"></div>
<div class="a sy" style="left:592.6px;top:672px;width:72px;height:36px;"></div>
<span class="t bd" style="left:601.99px;top:683.34px;font-size:16.22px;line-height:16.22px;font-weight:bold;color:#222;transform:scale(0.8990,1.0000)">FREQ 1</span>
<span class="t rg" style="left:476.02px;top:718.61px;font-size:16.28px;line-height:16.28px;font-weight:normal;color:#ececec;transform:scale(0.9784,1.0000)">Waveform</span>
<span class="t rg" style="left:606.69px;top:718.61px;font-size:16.28px;line-height:16.28px;font-weight:normal;color:#ececec;transform:scale(0.9650,1.0000)">Target</span>
<svg class="a" style="left:474px;top:672px" width="74" height="36" viewBox="-36.9 -17.8 74 36"><path d="M-12.4 0 C-7 -5 3 -9.6 13 -9.3 V-0.4" fill="none" stroke="#111" stroke-width="2.55" stroke-linecap="round" stroke-linejoin="miter"/></svg>
<div class="a panel" style="left:701.6px;top:58.3px;width:246.7px;height:683.7px;"></div>
<div class="a chk" style="left:713.1px;top:70.2px;width:37px;height:35.9px;"></div>
<span class="t bd" style="left:759.52px;top:82.2px;font-size:15.2px;line-height:15.2px;font-weight:bold;color:#efefef;transform:scale(0.9320,1.0000)">ENABLE</span>
<span class="t bd" style="left:886.55px;top:79.42px;font-size:20.15px;line-height:20.15px;font-weight:bold;color:#f4f4f4;transform:scale(0.9078,1.0000)">LFO 3</span>
<div class="a dframe" style="left:709.5px;top:114.2px;width:230.5px;height:394.6px;"></div>
<svg class="a" style="left:712px;top:116px" width="227" height="392" viewBox="712 116 227 392"><rect x="713.1" y="117.8" width="224.1" height="388.9" fill="url(#dbg)"/><path d="M713.1 312.3 L713.1 195.5 L713.1 195.5 L742.25 195.5 L742.25 430 L771.4 430 L771.4 195.5 L800.55 195.5 L800.55 430 L829.7 430 L829.7 195.5 L858.85 195.5 L858.85 430 L888 430 L888 195.5 L917.15 195.5 L917.15 430 L937.2 430 L937.2 312.3 Z" fill="url(#wf2)"/><line x1="769.12" y1="117.8" x2="769.12" y2="506.7" class="g"/><line x1="713.1" y1="215.02" x2="937.2" y2="215.02" class="g"/><line x1="825.15" y1="117.8" x2="825.15" y2="506.7" class="g c"/><line x1="713.1" y1="312.25" x2="937.2" y2="312.25" class="g c"/><line x1="881.17" y1="117.8" x2="881.17" y2="506.7" class="g"/><line x1="713.1" y1="409.47" x2="937.2" y2="409.47" class="g"/><path d="M714.1 506.7 V118.8 H937.2" fill="none" stroke="#b81e22" stroke-width="2.1"/><path d="M715.1 505.8 H936.3 V119.8" fill="none" stroke="#861a1e" stroke-width="1.4"/></svg>
<svg class="a" style="left:726px;top:515px" width="79" height="42" viewBox="726 515 79 42"><rect x="727.9" y="516.2" width="75.4" height="39.7" rx="2" fill="#bc1c1e"/><rect x="730.5" y="518.8" width="70.2" height="34.5" fill="#6e6262"/><rect x="731.4" y="519.7" width="68.4" height="32.7" fill="#d3d3d3"/></svg>
<span class="t bd" style="left:746.57px;top:524.46px;font-size:12.3px;line-height:12.3px;font-weight:bold;color:#222;transform:scale(0.8963,1.0000)">TEMPO</span>
<span class="t bd" style="left:750.9px;top:537.56px;font-size:12.3px;line-height:12.3px;font-weight:bold;color:#222;transform:scale(0.8945,1.0000)">SYNC</span>
<svg class="a" style="left:844px;top:515px" width="78" height="42" viewBox="844 515 78 42"><rect x="845.6" y="516.2" width="75.4" height="39.7" rx="2" fill="#bc1c1e"/><rect x="848.2" y="518.8" width="70.2" height="34.5" fill="#6e6262"/><rect x="849.1" y="519.7" width="68.4" height="32.7" fill="#d3d3d3"/></svg>
<span class="t bd" style="left:869.05px;top:524.46px;font-size:12.3px;line-height:12.3px;font-weight:bold;color:#222;transform:scale(0.8810,1.0000)">GATE</span>
<span class="t bd" style="left:868.05px;top:537.56px;font-size:12.3px;line-height:12.3px;font-weight:bold;color:#222;transform:scale(0.8945,1.0000)">SYNC</span>
<svg class="a" style="left:701px;top:560px" width="248" height="84" viewBox="701 560 248 84"><g transform="translate(765.7 601.8)"><line x1="-14" y1="24.25" x2="-17.8" y2="30.83" stroke="#383838" stroke-width="1.5"/><line x1="-24.25" y1="14" x2="-30.83" y2="17.8" stroke="#383838" stroke-width="1.5"/><line x1="-28" y1="0" x2="-35.6" y2="0" stroke="#383838" stroke-width="1.5"/><line x1="-24.25" y1="-14" x2="-30.83" y2="-17.8" stroke="#383838" stroke-width="1.5"/><line x1="-14" y1="-24.25" x2="-17.8" y2="-30.83" stroke="#383838" stroke-width="1.5"/><line x1="0" y1="-28" x2="0" y2="-35.6" stroke="#383838" stroke-width="1.5"/><line x1="14" y1="-24.25" x2="17.8" y2="-30.83" stroke="#383838" stroke-width="1.5"/><line x1="24.25" y1="-14" x2="30.83" y2="-17.8" stroke="#383838" stroke-width="1.5"/><line x1="28" y1="0" x2="35.6" y2="0" stroke="#383838" stroke-width="1.5"/><line x1="24.25" y1="14" x2="30.83" y2="17.8" stroke="#383838" stroke-width="1.5"/><line x1="14" y1="24.25" x2="17.8" y2="30.83" stroke="#383838" stroke-width="1.5"/><circle r="29.3" fill="#262626"/><circle r="25.9" fill="url(#ring)"/><circle cy="-0.5" r="21.1" fill="#cfcfcf"/><line x1="5.59" y1="-6.3" x2="10.57" y2="-11.64" stroke="#1c1c1c" stroke-width="3.8" stroke-linecap="round"/></g><g transform="translate(883.4 601.8)"><line x1="-14" y1="24.25" x2="-17.8" y2="30.83" stroke="#383838" stroke-width="1.5"/><line x1="-24.25" y1="14" x2="-30.83" y2="17.8" stroke="#383838" stroke-width="1.5"/><line x1="-28" y1="0" x2="-35.6" y2="0" stroke="#383838" stroke-width="1.5"/><line x1="-24.25" y1="-14" x2="-30.83" y2="-17.8" stroke="#383838" stroke-width="1.5"/><line x1="-14" y1="-24.25" x2="-17.8" y2="-30.83" stroke="#383838" stroke-width="1.5"/><line x1="0" y1="-28" x2="0" y2="-35.6" stroke="#383838" stroke-width="1.5"/><line x1="14" y1="-24.25" x2="17.8" y2="-30.83" stroke="#383838" stroke-width="1.5"/><line x1="24.25" y1="-14" x2="30.83" y2="-17.8" stroke="#383838" stroke-width="1.5"/><line x1="28" y1="0" x2="35.6" y2="0" stroke="#383838" stroke-width="1.5"/><line x1="24.25" y1="14" x2="30.83" y2="17.8" stroke="#383838" stroke-width="1.5"/><line x1="14" y1="24.25" x2="17.8" y2="30.83" stroke="#383838" stroke-width="1.5"/><circle r="29.3" fill="#262626"/><circle r="25.9" fill="url(#ring)"/><circle cy="-0.5" r="21.1" fill="#cfcfcf"/><line x1="4.47" y1="-7.18" x2="8.44" y2="-13.3" stroke="#1c1c1c" stroke-width="3.8" stroke-linecap="round"/></g></svg>
<span class="t rg" style="left:748.43px;top:648.58px;font-size:15.84px;line-height:15.84px;font-weight:normal;color:#ececec;transform:scale(0.9989,1.0000)">Rate</span>
<span class="t rg" style="left:855.12px;top:648.58px;font-size:15.84px;line-height:15.84px;font-weight:normal;color:#ececec;transform:scale(1.0327,1.0000)">Amount</span>
<div class="a sy" style="left:729.6px;top:672px;width:72px;height:36px;"></div>
<div class="a sy" style="left:847.3px;top:672px;width:72px;height:36px;"></div>
<span class="t bd" style="left:857.78px;top:683.34px;font-size:16.22px;line-height:16.22px;font-weight:bold;color:#222;transform:scale(0.9054,1.0000)">PHASE</span>
<span class="t rg" style="left:730.72px;top:718.61px;font-size:16.28px;line-height:16.28px;font-weight:normal;color:#ececec;transform:scale(0.9784,1.0000)">Waveform</span>
<span class="t rg" style="left:861.39px;top:718.61px;font-size:16.28px;line-height:16.28px;font-weight:normal;color:#ececec;transform:scale(0.9650,1.0000)">Target</span>
<svg class="a" style="left:729px;top:672px" width="74" height="36" viewBox="-36.6 -17.8 74 36"><path d="M-12.8 0.7 V-8.7 H-0.2 V9.5 H12.6 V-0.1" fill="none" stroke="#111" stroke-width="2.55" stroke-linecap="round" stroke-linejoin="miter"/></svg>
<div class="a panel" style="left:956.3px;top:58.3px;width:246.7px;height:683.7px;"></div>
<svg class="a" style="left:965px;top:67px" width="42" height="42" viewBox="965 67 42 42"><rect x="966.3" y="68" width="39.7" height="40" rx="2" fill="#bc1c1e"/><rect x="969.1" y="70.8" width="34.1" height="34.4" fill="#806060"/><rect x="970.1" y="71.8" width="32.1" height="32.4" fill="#d0d0d0"/></svg>
<span class="t bd" style="left:1014.22px;top:82.2px;font-size:15.2px;line-height:15.2px;font-weight:bold;color:#efefef;transform:scale(0.9320,1.0000)">ENABLE</span>
<span class="t bd" style="left:1141.26px;top:79.42px;font-size:20.15px;line-height:20.15px;font-weight:bold;color:#f4f4f4;transform:scale(0.8980,1.0000)">LFO 4</span>
<div class="a dframe" style="left:964.2px;top:114.2px;width:230.5px;height:394.6px;"></div>
<svg class="a" style="left:966px;top:116px" width="227" height="392" viewBox="966 116 227 392"><rect x="967.8" y="117.8" width="224.1" height="388.9" fill="url(#dbg)"/><path d="M967.8 312.3 L967.8 378.6 L991.22 378.6 L991.22 429 L1014.64 429 L1014.64 403.8 L1038.06 403.8 L1038.06 199.3 L1061.48 199.3 L1061.48 391.3 L1084.9 391.3 L1084.9 275.2 L1108.32 275.2 L1108.32 387 L1131.74 387 L1131.74 257.8 L1155.16 257.8 L1155.16 405.2 L1178.58 405.2 L1178.58 480.5 L1191.9 480.5 L1191.9 312.3 Z" fill="url(#wf)"/><line x1="1023.82" y1="117.8" x2="1023.82" y2="506.7" class="g"/><line x1="967.8" y1="215.02" x2="1191.9" y2="215.02" class="g"/><line x1="1079.85" y1="117.8" x2="1079.85" y2="506.7" class="g c"/><line x1="967.8" y1="312.25" x2="1191.9" y2="312.25" class="g c"/><line x1="1135.88" y1="117.8" x2="1135.88" y2="506.7" class="g"/><line x1="967.8" y1="409.47" x2="1191.9" y2="409.47" class="g"/><path d="M967.8 378.6 L991.22 378.6 L991.22 429 L1014.64 429 L1014.64 403.8 L1038.06 403.8 L1038.06 199.3 L1061.48 199.3 L1061.48 391.3 L1084.9 391.3 L1084.9 275.2 L1108.32 275.2 L1108.32 387 L1131.74 387 L1131.74 257.8 L1155.16 257.8 L1155.16 405.2 L1178.58 405.2 L1178.58 480.5 L1191.9 480.5" fill="none" stroke="#dc1c1e" stroke-width="2.5" stroke-linejoin="miter"/><path d="M968.8 506.7 V118.8 H1191.9" fill="none" stroke="#b81e22" stroke-width="2.1"/><path d="M969.8 505.8 H1191 V119.8" fill="none" stroke="#861a1e" stroke-width="1.4"/></svg>
<svg class="a" style="left:981px;top:515px" width="78" height="42" viewBox="981 515 78 42"><rect x="982.6" y="516.2" width="75.4" height="39.7" rx="2" fill="#bc1c1e"/><rect x="985.2" y="518.8" width="70.2" height="34.5" fill="#6e6262"/><rect x="986.1" y="519.7" width="68.4" height="32.7" fill="#d3d3d3"/></svg>
<span class="t bd" style="left:1001.27px;top:524.46px;font-size:12.3px;line-height:12.3px;font-weight:bold;color:#222;transform:scale(0.8963,1.0000)">TEMPO</span>
<span class="t bd" style="left:1005.04px;top:537.56px;font-size:12.3px;line-height:12.3px;font-weight:bold;color:#222;transform:scale(0.8945,1.0000)">SYNC</span>
<div class="a sy" style="left:1102px;top:518px;width:72px;height:36.3px;"></div>
<span class="t bd" style="left:1123.75px;top:524.46px;font-size:12.3px;line-height:12.3px;font-weight:bold;color:#222;transform:scale(0.8810,1.0000)">GATE</span>
<span class="t bd" style="left:1123.3px;top:537.56px;font-size:12.3px;line-height:12.3px;font-weight:bold;color:#222;transform:scale(0.8943,1.0000)">SYNC</span>
<svg class="a" style="left:956px;top:560px" width="248" height="84" viewBox="956 560 248 84"><g transform="translate(1020.4 601.8)"><line x1="-14" y1="24.25" x2="-17.8" y2="30.83" stroke="#383838" stroke-width="1.5"/><line x1="-24.25" y1="14" x2="-30.83" y2="17.8" stroke="#383838" stroke-width="1.5"/><line x1="-28" y1="0" x2="-35.6" y2="0" stroke="#383838" stroke-width="1.5"/><line x1="-24.25" y1="-14" x2="-30.83" y2="-17.8" stroke="#383838" stroke-width="1.5"/><line x1="-14" y1="-24.25" x2="-17.8" y2="-30.83" stroke="#383838" stroke-width="1.5"/><line x1="0" y1="-28" x2="0" y2="-35.6" stroke="#383838" stroke-width="1.5"/><line x1="14" y1="-24.25" x2="17.8" y2="-30.83" stroke="#383838" stroke-width="1.5"/><line x1="24.25" y1="-14" x2="30.83" y2="-17.8" stroke="#383838" stroke-width="1.5"/><line x1="28" y1="0" x2="35.6" y2="0" stroke="#383838" stroke-width="1.5"/><line x1="24.25" y1="14" x2="30.83" y2="17.8" stroke="#383838" stroke-width="1.5"/><line x1="14" y1="24.25" x2="17.8" y2="30.83" stroke="#383838" stroke-width="1.5"/><circle r="29.3" fill="#262626"/><circle r="25.9" fill="url(#ring)"/><circle cy="-0.5" r="21.1" fill="#cfcfcf"/><line x1="7.88" y1="1.96" x2="14.9" y2="3.97" stroke="#1c1c1c" stroke-width="3.8" stroke-linecap="round"/></g><g transform="translate(1138.1 601.8)"><line x1="-14" y1="24.25" x2="-17.8" y2="30.83" stroke="#383838" stroke-width="1.5"/><line x1="-24.25" y1="14" x2="-30.83" y2="17.8" stroke="#383838" stroke-width="1.5"/><line x1="-28" y1="0" x2="-35.6" y2="0" stroke="#383838" stroke-width="1.5"/><line x1="-24.25" y1="-14" x2="-30.83" y2="-17.8" stroke="#383838" stroke-width="1.5"/><line x1="-14" y1="-24.25" x2="-17.8" y2="-30.83" stroke="#383838" stroke-width="1.5"/><line x1="0" y1="-28" x2="0" y2="-35.6" stroke="#383838" stroke-width="1.5"/><line x1="14" y1="-24.25" x2="17.8" y2="-30.83" stroke="#383838" stroke-width="1.5"/><line x1="24.25" y1="-14" x2="30.83" y2="-17.8" stroke="#383838" stroke-width="1.5"/><line x1="28" y1="0" x2="35.6" y2="0" stroke="#383838" stroke-width="1.5"/><line x1="24.25" y1="14" x2="30.83" y2="17.8" stroke="#383838" stroke-width="1.5"/><line x1="14" y1="24.25" x2="17.8" y2="30.83" stroke="#383838" stroke-width="1.5"/><circle r="29.3" fill="#262626"/><circle r="25.9" fill="url(#ring)"/><circle cy="-0.5" r="21.1" fill="#cfcfcf"/><line x1="4.59" y1="6.5" x2="8.67" y2="12.55" stroke="#1c1c1c" stroke-width="3.8" stroke-linecap="round"/></g></svg>
<span class="t rg" style="left:1003.13px;top:648.58px;font-size:15.84px;line-height:15.84px;font-weight:normal;color:#ececec;transform:scale(0.9989,1.0000)">Rate</span>
<span class="t rg" style="left:1109.82px;top:648.58px;font-size:15.84px;line-height:15.84px;font-weight:normal;color:#ececec;transform:scale(1.0327,1.0000)">Amount</span>
<div class="a sy" style="left:984.3px;top:672px;width:72px;height:36px;"></div>
<div class="a sy" style="left:1102px;top:672px;width:72px;height:36px;"></div>
<span class="t bd" style="left:1125.86px;top:683.34px;font-size:16.22px;line-height:16.22px;font-weight:bold;color:#222;transform:scale(1.0395,1.0000)">FM</span>
<span class="t rg" style="left:985.42px;top:718.61px;font-size:16.28px;line-height:16.28px;font-weight:normal;color:#ececec;transform:scale(0.9784,1.0000)">Waveform</span>
<span class="t rg" style="left:1116.09px;top:718.61px;font-size:16.28px;line-height:16.28px;font-weight:normal;color:#ececec;transform:scale(0.9650,1.0000)">Target</span>
<svg class="a" style="left:984px;top:672px" width="74" height="36" viewBox="-36.3 -17.8 74 36"><path d="M-12.3 1.2 V-8.2 H-7.2 V3.4 H-2.3 V9.5 H3.8 V-6 H9.7 V3.4 H13.2" fill="none" stroke="#111" stroke-width="2.55" stroke-linecap="round" stroke-linejoin="miter"/></svg>
<svg class="a" style="left:1211px;top:48px" width="56" height="744" viewBox="1211 48 56 744" fill="none" stroke="#b9b9b9" stroke-width="2.1"><rect x="1223.2" y="103" width="28.2" height="12.6"/><path d="M1230.8 97.5 H1258.3 V110.4"/><path d="M1223.2 403.9 V392.2 L1240.6 384.3 L1258.2 392.2 V403.9 Z"/><path d="M1231.6 673.6 L1222.6 681 L1231.6 688.6 M1223.5 681 H1255 A6.6 6.6 0 0 1 1255 694.3 H1240.6" stroke-width="2.3"/></svg>
</body></html>
